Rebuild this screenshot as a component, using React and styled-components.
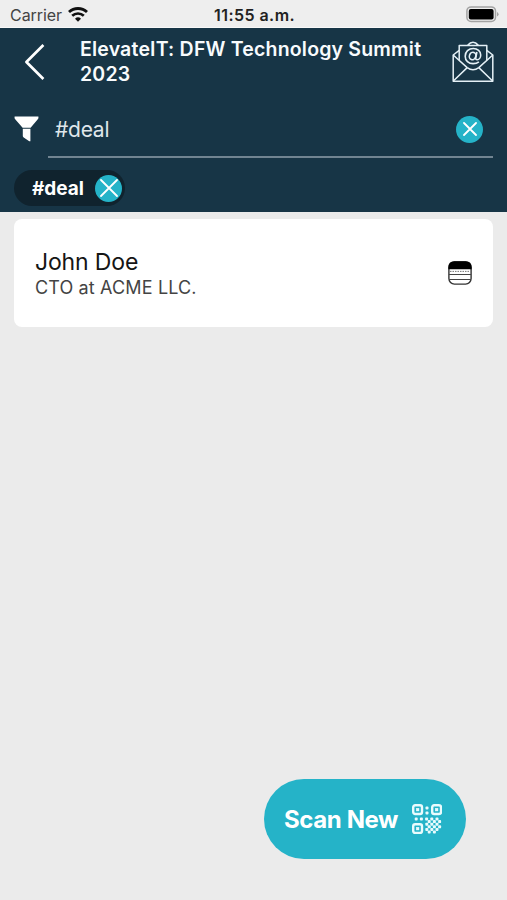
import React from "react";
import styled, { createGlobalStyle } from "styled-components";

const App = () => {
  return (
    <>
      <GlobalStyle />
      <Screen>
        <StatusBar>
          <Carrier>
            <span>Carrier</span>
            <WifiIcon />
          </Carrier>
          <Time>11:55 a.m.</Time>
          <Battery>
            <BatteryIcon />
          </Battery>
        </StatusBar>

        <Header>
          <TitleRow>
            <BackButton aria-label="Back">
              <BackIcon />
            </BackButton>
            <Title>ElevateIT: DFW Technology Summit 2023</Title>
            <MailButton aria-label="Email">
              <MailIcon />
            </MailButton>
          </TitleRow>
          <FilterRow>
            <FunnelIcon />
            <Field>
              <FieldText>#deal</FieldText>
              <ClearButton aria-label="Clear">
                <CrossIcon size={14} />
              </ClearButton>
            </Field>
          </FilterRow>
          <Tag>
            <TagText>#deal</TagText>
            <ClearButton aria-label="Remove tag">
              <CrossIcon size={18} />
            </ClearButton>
          </Tag>
        </Header>

        <List>
          <Card>
            <Person>
              <Name>John Doe</Name>
              <Job>CTO at ACME LLC.</Job>
            </Person>
            <NoteIcon />
          </Card>
        </List>

        <ScanButton>
          <ScanText>Scan New</ScanText>
          <QrIcon />
        </ScanButton>
      </Screen>
    </>
  );
};

const WifiIcon = () => (
  <svg width="20" height="15" viewBox="0 0 20 15" fill="none" stroke="#111">
    <path d="M1 5.1a13 13 0 0 1 18 0" strokeWidth="2.8" />
    <path d="M4.2 8.8a8.4 8.4 0 0 1 11.6 0" strokeWidth="2.7" />
    <path d="M10 14.8l-3-3.1a4.3 4.3 0 0 1 6 0z" fill="#111" stroke="none" />
  </svg>
);

const BatteryIcon = () => (
  <svg width="33" height="17" viewBox="0 0 33 17">
    <rect x="0.9" y="0.9" width="28.6" height="14.6" rx="4.2" fill="none" stroke="#a3a3a3" strokeWidth="1.5" />
    <rect x="2.8" y="3" width="24.8" height="10.4" rx="2" fill="#000" />
    <path d="M31 6v4.4q1.6-.7 1.6-2.2T31 6z" fill="#a3a3a3" />
  </svg>
);

const BackIcon = () => (
  <svg width="21" height="36" viewBox="0 0 21 36" fill="none" stroke="#fff" strokeWidth="2.7">
    <path d="M19.4 1L2.4 18l17 17" strokeLinejoin="round" />
  </svg>
);

const MailIcon = () => (
  <svg width="42" height="42" viewBox="0 0 42 42" fill="none" stroke="#e4f0f6" strokeWidth="1.5" strokeLinejoin="round">
    <path d="M7.2 9.4L1.2 14v26.2h39.6V14l-6-4.6" />
    <path d="M7.2 19V4.4h27.6V19M15.6 4.2q5.4-6 10.8 0" />
    <path d="M1.2 14l14 12.6q5.8 4.4 11.6 0L40.8 14M1.6 39.8L15.2 26.6M40.4 39.8L26.8 26.6" />
    <ellipse cx="20.6" cy="15" rx="3.2" ry="3.8" transform="rotate(20 20.6 15)" strokeWidth="1.6" />
    <path d="M24.9 11l-1.2 6q-.2 1.8 1.4 1.8c2 0 3.6-2.3 3.6-4.9 0-3.8-3.1-6.4-7.4-6.4-4.7 0-8.1 3.3-8.1 7.7s3.3 7.4 7.9 7.4c2.3 0 4.3-.6 5.8-1.8" strokeWidth="1.6" />
  </svg>
);

const FunnelIcon = () => (
  <svg width="25" height="26" viewBox="0 0 25 26" fill="#fff">
    <path d="M.6.6h23.8q.5 1.8-.8 3l-7 8.2h-8L1.4 3.6Q.1 2.4.6.6z" />
    <path d="M8.8 12.7h7.6v12.5q-.8.4-1.5-.2l-5.2-3.6q-.9-.6-.9-1.5z" />
  </svg>
);

const CrossIcon = ({ size }) => (
  <svg width={size} height={size} viewBox={`0 0 ${size} ${size}`} fill="none" stroke="#fff" strokeWidth="1.8" strokeLinecap="round">
    <path d={`M1 1L${size - 1} ${size - 1}M${size - 1} 1L1 ${size - 1}`} />
  </svg>
);

const NoteIcon = () => (
  <svg width="24" height="24" viewBox="0 0 24 24" fill="none">
    <rect x="0.9" y="0.9" width="22.2" height="22.2" rx="5.5" stroke="#333" strokeWidth="1.4" />
    <path d="M.4 8.2V6.3Q.4.3 6.4.3h11.2q6 0 6 6v1.9z" fill="#000" />
    <path d="M2 10.4h20" stroke="#777" strokeDasharray="1.5 1" />
    <path d="M1 13.5h22M1 18.5h22" stroke="#444" strokeWidth="1.2" />
  </svg>
);

// centres of the small modules, in the 30px box of the code
const qrDots = [
  [15, 4], [15, 9], [4.2, 15], [9.4, 15], [14.6, 15],
  [19.8, 15], [25, 15],
  [17.2, 17.6], [22.4, 17.6], [27.6, 17.6],
  [14.8, 20.2], [19.8, 20.2], [25, 20.2],
  [17.2, 22.8], [22.4, 22.8], [27.6, 22.8],
  [14.8, 25.4], [19.8, 25.4], [25, 25.4],
  [17.2, 28], [22.4, 28],
];

const QrIcon = () => (
  <svg width="30" height="30" viewBox="0 0 30 30" fill="none">
    {[[0, 0], [19, 0], [0, 19]].map(([x, y]) => (
      <g key={`${x}-${y}`} stroke="#e9fbfd">
        <rect x={x + 1.2} y={y + 1.2} width="8.8" height="8.8" rx="2" strokeWidth="2.4" />
        <rect x={x + 4.2} y={y + 4.2} width="2.8" height="2.8" fill="#e9fbfd" strokeWidth="0.4" />
      </g>
    ))}
    {qrDots.map(([x, y]) => (
      <rect key={`${x}-${y}`} x={x - 1.5} y={y - 1.5} width="3" height="3" rx="0.9" fill="#e9fbfd" />
    ))}
  </svg>
);

const GlobalStyle = createGlobalStyle`
  * {
    box-sizing: border-box;
  }
  body {
    margin: 0;
    font-family: Inter, "Liberation Sans", sans-serif;
  }
  button {
    border: none;
    padding: 0;
    background: none;
    font-family: inherit;
  }
  svg {
    display: block;
    flex: none;
  }
  h1, h2, p {
    margin: 0;
  }
`;

const Screen = styled.div`
  display: flex;
  flex-direction: column;
  height: 900px;
  background: #ebebeb;
`;

const StatusBar = styled.div`
  display: grid;
  grid-template-columns: 1fr auto 1fr;
  align-items: center;
  height: 28px;
  padding: 2px 8px 0 10px;
  background: #eeeeee;
  border-bottom: 1px solid #f8f8f8;
`;

const Carrier = styled.div`
  display: flex;
  align-items: center;
  gap: 6px;
  font-size: 16px;
  letter-spacing: -0.05px;
  color: #444;
`;

const Time = styled.div`
  font-size: 16px;
  font-weight: 600;
  letter-spacing: 0.45px;
  color: #222;
`;

const Battery = styled.div`
  justify-self: end;
`;

const Header = styled.header`
  height: 184px;
  padding: 0 13px 0 14px;
  background: #173546;
`;

const TitleRow = styled.div`
  display: flex;
  align-items: flex-start;
  height: 80px;
`;

const BackButton = styled.button`
  width: 66px;
  padding: 16px 0 0 10px;
`;

const Title = styled.h1`
  flex: 1;
  padding-top: 9px;
  font-size: 19.5px;
  font-weight: 600;
  line-height: 24.5px;
  letter-spacing: 0.19px;
  color: #f8fbfd;
`;

const MailButton = styled.button`
  padding-top: 13px;
`;

const FilterRow = styled.div`
  display: flex;
  align-items: flex-start;
  gap: 9px;
  height: 62px;

  > svg {
    margin-top: 8px;
  }
`;

const Field = styled.div`
  display: flex;
  flex: 1;
  align-items: center;
  justify-content: space-between;
  height: 50px;
  margin-right: 1px;
  padding: 0 10px 6px 7px;
  border-bottom: 2px solid #718491;
`;

const FieldText = styled.span`
  font-size: 21px;
  letter-spacing: -0.25px;
  color: #dfe6ea;
`;

const ClearButton = styled.button`
  display: flex;
  align-items: center;
  justify-content: center;
  width: 27px;
  height: 27px;
  border-radius: 50%;
  background: #25b3c8;
`;

const Tag = styled.div`
  display: flex;
  align-items: center;
  justify-content: space-between;
  width: 111px;
  height: 36px;
  padding: 0 3px 0 18px;
  border-radius: 18px;
  background: #10232e;
`;

const TagText = styled.span`
  font-size: 19px;
  font-weight: 700;
  color: #fff;
`;

const List = styled.main`
  padding: 7px 14px;
`;

const Card = styled.div`
  display: flex;
  align-items: center;
  justify-content: space-between;
  height: 108px;
  padding: 0 21px;
  border-radius: 8px;
  background: #fff;
`;

const Person = styled.div`
  padding-top: 2px;
`;

const Name = styled.h2`
  font-size: 23px;
  font-weight: 400;
  line-height: 28px;
  letter-spacing: -0.15px;
  color: #151515;
`;

const Job = styled.p`
  font-size: 18px;
  line-height: 24px;
  letter-spacing: 0.14px;
  color: #444;
`;

const ScanButton = styled.button`
  display: flex;
  align-items: center;
  justify-content: space-between;
  align-self: flex-end;
  width: 202px;
  height: 80px;
  margin: auto 41px 41px 0;
  padding: 0 24px 0 20px;
  border-radius: 40px;
  background: #25b3c8;
`;

const ScanText = styled.span`
  font-size: 24px;
  font-weight: 700;
  letter-spacing: -0.4px;
  color: #fff;
`;

export default App;
